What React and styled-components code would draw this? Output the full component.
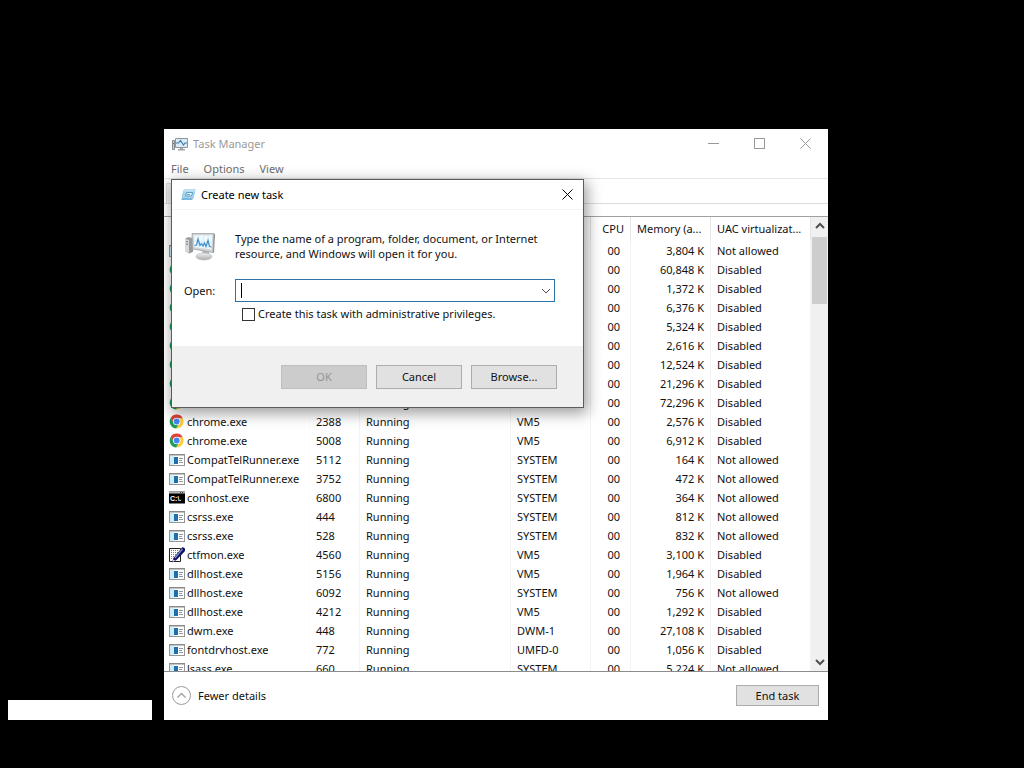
import React from 'react'
import styled, { createGlobalStyle } from 'styled-components'

const textColor = '#111';
const mutedColor = '#999';
const lineColor = '#e5e5e5';
const accentColor = '#2a72a8';
const faceColor = '#e1e1e1';
const fontSize = '11px';
const rowHeight = '19px';

const GlobalStyle = createGlobalStyle`
  * {
    box-sizing: border-box;
  }
  html, body, #root {
    height: 100%;
  }
  body {
    margin: 0;
    background: #000;
    color: ${textColor};
    font-family: "Noto Sans", "Open Sans", sans-serif;
    font-size: ${fontSize};
    line-height: 16px;
  }
  button, input {
    font: inherit;
    color: inherit;
    margin: 0;
    padding: 0;
  }
  svg {
    display: block;
    flex: none;
  }
`

const Desktop = styled.div`
  position: relative;
  height: 100%;
  min-height: 600px;
  overflow: hidden;
`
const BlankBox = styled.div`
  position: absolute;
  left: 8px;
  bottom: 48px;
  width: 144px;
  height: 20px;
  background: #fff;
`
const Window = styled.main`
  position: absolute;
  top: 129px;
  right: 196px;
  bottom: 48px;
  left: 164px;
  display: flex;
  flex-direction: column;
  background: #fff;
`
const TitleBar = styled.header`
  display: flex;
  align-items: center;
  height: 30px;
  padding-left: 8px;
  color: ${mutedColor};
`
const Title = styled.h1`
  flex: 1;
  margin: 0 0 0 5px;
  font-size: ${fontSize};
  font-weight: 400;
`
const CaptionButton = styled.button`
  display: flex;
  align-items: center;
  justify-content: center;
  align-self: flex-start;
  width: ${props => props.$width || '46px'};
  height: 29px;
  border: 0;
  background: none;
`
const MenuBar = styled.nav`
  display: flex;
  gap: 15px;
  height: 19px;
  padding-left: 7px;
  line-height: 20px;
`
const MenuItem = styled.button`
  border: 0;
  background: none;
  color: #6d6d6d;
`
const TabStrip = styled.div`
  display: flex;
  align-items: flex-end;
  height: 26px;
  padding-left: 2px;
  border-top: 1px solid ${lineColor};
  border-bottom: 1px solid #dcdcdc;
`
const Tab = styled.div`
  width: 62px;
  height: 20px;
  border: 1px solid #d9d9d9;
  border-bottom: 0;
  background: #f0f0f0;
`
const Content = styled.section`
  display: flex;
  flex: 1;
  min-height: 0;
  margin-top: 12px;
  border-top: 1px solid #a0a0a0;
  border-bottom: 1px solid #8c8c8c;
`
const TableArea = styled.div`
  flex: 1;
  min-width: 0;
  overflow: hidden;
`
const Table = styled.table`
  width: 100%;
  table-layout: fixed;
  border-collapse: separate;
  border-spacing: 0;
`
const Column = styled.col`
  width: ${props => props.$width};
`
const Cell = styled.td`
  height: ${rowHeight};
  padding: 0 ${props => props.$end || '6px'} 0 6px;
  overflow: hidden;
  border-right: 1px solid #f4f4f4;
  line-height: 18px;
  text-align: ${props => props.$align || 'left'};
  white-space: nowrap;

  &:first-child {
    padding: 0 0 0 5px;
    border-color: #fcfcfc;
  }
`
const HeadCell = styled(Cell).attrs({ as: 'th', scope: 'col' })`
  height: 24px;
  border-color: ${lineColor};
  font-weight: 400;
`
const ProcessName = styled.div`
  display: flex;
  align-items: center;
  gap: 2px;
`
const ScrollBar = styled.div`
  display: flex;
  flex-direction: column;
  width: 17px;
  padding: 0 1px;
  background: #f0f0f0;
`
const ScrollButton = styled.button`
  display: flex;
  align-items: center;
  justify-content: center;
  height: 18px;
  border: 0;
  background: none;
`
const ScrollTrack = styled.div`
  flex: 1;
  padding-top: 2px;
`
const ScrollThumb = styled.div`
  height: 16%;
  min-height: 20px;
  background: #cdcdcd;
`
const Footer = styled.footer`
  display: flex;
  align-items: center;
  justify-content: space-between;
  height: 48px;
  padding: 0 9px 1px 8px;
`
const DetailsButton = styled.button`
  display: flex;
  align-items: center;
  gap: 7px;
  border: 0;
  background: none;
`
const Button = styled.button`
  width: ${props => props.$width || '86px'};
  height: ${props => props.$height || '24px'};
  border: 1px solid #adadad;
  background: ${faceColor};

  &:disabled {
    border-color: #bfbfbf;
    background: #ccc;
    color: #949494;
  }
`
const Dialog = styled.form`
  position: absolute;
  top: 50px;
  left: 7px;
  width: 413px;
  border: 1px solid #5c5c5c;
  background: #fff;
  box-shadow: 2px 4px 14px 1px rgba(0, 0, 0, 0.4);
`
const DialogTitleBar = styled(TitleBar)`
  padding-left: 9px;
  border-bottom: 1px solid #f3f3f3;
  color: #000;
`
const DialogBody = styled.div`
  display: grid;
  grid-template-columns: 51px 1fr;
  row-gap: 17px;
  align-items: center;
  align-content: start;
  height: 136px;
  padding: 20px 28px 0 12px;
`
const Message = styled.p`
  margin: 0;
  line-height: 15px;
`
const ComboBox = styled.div`
  position: relative;
  display: flex;
  height: 23px;
  border: 1px solid ${accentColor};
`
const ComboInput = styled.input`
  flex: 1;
  min-width: 0;
  padding: 0 5px;
  border: 0;
  outline: 0;
  background: none;
  caret-color: transparent;
`
const Caret = styled.span`
  position: absolute;
  top: 3px;
  left: 5px;
  width: 1px;
  height: 15px;
  background: #000;
`
const ComboButton = styled.button`
  display: flex;
  align-items: center;
  justify-content: center;
  width: 17px;
  border: 0;
  background: none;
`
const CheckRow = styled.div`
  display: flex;
  grid-column: 2;
  align-items: center;
  gap: 3px;
  height: 16px;
  margin-top: -13px;
  padding-left: 7px;
`
const CheckBox = styled.input`
  width: 13px;
  height: 13px;
  border: 1px solid #333;
  background: #fff;
  appearance: none;

  &:checked {
    background: #333;
  }
`
const DialogFooter = styled.div`
  display: flex;
  align-items: center;
  justify-content: flex-end;
  gap: 9px;
  height: 61px;
  padding-right: 26px;
  background: #f0f0f0;
`

const TaskManagerIcon = () =>
  <svg width="16" height="16" viewBox="0 0 16 16">
    <path d="M.5 4.500h2v9h-2z" fill="#c7ccd0" stroke="#868e94" />
    <path d="M1 7.500h1" stroke="#6f777d" />
    <path d="M3.500 2.500h12v9h-12z" fill="#dcecf7" stroke="#8f979d" />
    <path d="M4 7h2.500l2-2.500 3 4.500 1.500-2H15" fill="none" stroke="#3f7da8" strokeWidth="1.200" />
    <path d="M8 12h3v1h2v1.500H6V13h2z" fill="#a0a8ae" />
  </svg>

const RunIcon = () =>
  <svg width="15" height="12" viewBox="0 0 15 12">
    <path d="M3 .5h11.500L12.500 9l-1.500 2H.5l1-6z" fill="#79b8dc" />
    <path d="M3 .5h11.500l-2 8.500H1z" fill="#a4d4ee" />
    <path d="M3 .5h11.500l-.5 2H2.600z" fill="#c4e4f4" />
    <path d="M5.500 3.500h6L10.700 7H4.600z" fill="#e9f7fc" stroke="#5c9fc8" />
    <path d="M6 5.500h3" stroke="#5c9fc8" />
  </svg>

const RunBigIcon = () =>
  <svg width="32" height="32" viewBox="0 0 32 32">
    <defs>
      <linearGradient id="stand" x1="0" y1="0" x2="0" y2="1">
        <stop offset="0" stopColor="#f2f2f2" />
        <stop offset="1" stopColor="#a8abad" />
      </linearGradient>
    </defs>
    <path d="M1 9l3-2 5 1v14l-4 1.500L1 21z" fill="#9a9d9f" />
    <path d="M1 9l4 1v13l-4-2z" fill="#d9dadb" />
    <path d="M2 11.500l2 .5M2 14l2 .5" stroke="#777b7e" />
    <path d="M18 20l7 1v5h-6z" fill="#b4b7b9" />
    <ellipse cx="20" cy="26.500" rx="8" ry="3.500" fill="url(#stand)" stroke="#b2b5b7" strokeWidth=".6" />
    <path d="M8 3.500L30 3.500l-1 19L8.500 19z" fill="#d0d2d3" stroke="#9fa3a6" strokeWidth=".8" />
    <path d="M30 3.500l1 1-1 18.500-1-.5z" fill="#8b8f92" />
    <path d="M9.800 5.300h18.500l-.8 14.200-17.200-2.300z" fill="#eef8fd" />
    <path d="M10 11l18 1.500M14.500 5.300v12.500M19.500 5.300v13M24 5.300v13.500" stroke="#cbe6f3" strokeWidth=".7" />
    <path d="M10.500 15.500l2-.5 1.500-6 2 6.500 1.500-2 1.500 2.500 1.500-3 1.500 3.500 2-6 1.500 6 2 .5" fill="none" stroke="#3f8fd0" strokeWidth="1.200" />
  </svg>

const ExeIcon = () =>
  <svg width="16" height="16" viewBox="0 0 16 16">
    <rect x=".5" y="2.500" width="15" height="11" fill="#fff" stroke="#969696" />
    <path d="M0 2.500h16" stroke="#8a8a8a" />
    <path d="M1 3.500h14" stroke="#c4c4c4" />
    <path d="M1 4h4v9H1z" fill="#cdeef8" />
    <path d="M5 5h4v7H5z" fill="#1f6fae" />
    <path d="M10 6.500h4M10 8.500h3M10 10.500h4" stroke="#8b9aa5" />
  </svg>

const ChromeIcon = () =>
  <svg width="16" height="16" viewBox="0 0 16 16">
    <path d="M1.600 4a7 7 0 0 1 12.300 .5H8L4.900 9.500z" fill="#dc4437" />
    <path d="M1.600 4A7 7 0 0 0 7.200 14.500L10.500 9.500H5z" fill="#1c9c58" />
    <path d="M13.900 4.500A7 7 0 0 1 7.200 14.500L10.500 9.500 10 4.500z" fill="#fccd40" />
    <circle cx="7.700" cy="7.500" r="3.700" fill="#fff" />
    <circle cx="7.700" cy="7.500" r="2.900" fill="#4285f4" />
  </svg>

const ConsoleIcon = () =>
  <svg width="16" height="16" viewBox="0 0 16 16">
    <path d="M0 1.500h16v12H0z" fill="#000" />
    <path d="M0 2.500h16" stroke="#b9b9b9" strokeWidth="2" />
    <path d="M11 2.500h1M13 2.500h1" stroke="#444" />
    <text x="1" y="11" fill="#fff" fontFamily="Liberation Sans, sans-serif" fontSize="7" fontWeight="700">C:\.</text>
  </svg>

const PenIcon = () =>
  <svg width="16" height="16" viewBox="0 0 16 16">
    <path d="M.5 1.500h11v13H.5z" fill="#fff" stroke="#222" />
    <path d="M2 3.500h8M2 5.500h8M2 7.500h8M2 9.500h8M2 11.500h8" stroke="#7a7a9a" strokeDasharray="1 1" />
    <path d="M13.500 0L16 1.500V4l-8.500 9L3 15.500l1.500-4.500z" fill="#11115e" />
    <path d="M13.500 2L6 11" stroke="#7a8fd8" strokeWidth="1.200" />
    <path d="M3.500 15l1-2.500 1.500 1z" fill="#fff" />
  </svg>

const Chevron = ({ up, size = 10, color = '#505050', weight = 2 }) =>
  <svg width={size} height={size} viewBox="0 0 10 10">
    <path d={up ? 'M1 7l4-4 4 4' : 'M1 3l4 4 4-4'} fill="none" stroke={color} strokeWidth={weight} />
  </svg>

const Cross = ({ size = 11 }) =>
  <svg width={size} height={size} viewBox="0 0 11 11">
    <path d="M.5.5l10 10M10.500.5l-10 10" stroke="currentColor" />
  </svg>

const FewerIcon = () =>
  <svg width="19" height="19" viewBox="0 0 19 19">
    <circle cx="9.500" cy="9.500" r="9" fill="none" stroke="#9a9a9a" />
    <path d="M5.500 11.500l4-4 4 4" fill="none" stroke="#a6a6a6" strokeWidth="1.500" />
  </svg>

const icons = {
  exe: ExeIcon,
  chrome: ChromeIcon,
  console: ConsoleIcon,
  pen: PenIcon,
}

const columns = [
  { label: 'Name', width: '146px' },
  { label: 'PID', width: '50px' },
  { label: 'Status', width: '151px' },
  { label: 'User name', width: '80px' },
  { label: 'CPU', title: 'CPU', width: '40px', align: 'right' },
  { label: 'Memory', title: 'Memory (a...', width: '80px' },
  { label: 'UAC virtualization', title: 'UAC virtualizat...', width: 'auto' },
]

// icon, name, pid, status, user, memory, UAC virtualization
const processes = [
  ['exe', '', '', '', '', '3,804 K', 'Not allowed'],
  ['chrome', '', '', '', '', '60,848 K', 'Disabled'],
  ['chrome', '', '', '', '', '1,372 K', 'Disabled'],
  ['chrome', '', '', '', '', '6,376 K', 'Disabled'],
  ['chrome', '', '', '', '', '5,324 K', 'Disabled'],
  ['chrome', '', '', '', '', '2,616 K', 'Disabled'],
  ['chrome', '', '', '', '', '12,524 K', 'Disabled'],
  ['chrome', '', '', '', '', '21,296 K', 'Disabled'],
  ['chrome', '', '', 'Running', '', '72,296 K', 'Disabled'],
  ['chrome', 'chrome.exe', '2388', 'Running', 'VM5', '2,576 K', 'Disabled'],
  ['chrome', 'chrome.exe', '5008', 'Running', 'VM5', '6,912 K', 'Disabled'],
  ['exe', 'CompatTelRunner.exe', '5112', 'Running', 'SYSTEM', '164 K', 'Not allowed'],
  ['exe', 'CompatTelRunner.exe', '3752', 'Running', 'SYSTEM', '472 K', 'Not allowed'],
  ['console', 'conhost.exe', '6800', 'Running', 'SYSTEM', '364 K', 'Not allowed'],
  ['exe', 'csrss.exe', '444', 'Running', 'SYSTEM', '812 K', 'Not allowed'],
  ['exe', 'csrss.exe', '528', 'Running', 'SYSTEM', '832 K', 'Not allowed'],
  ['pen', 'ctfmon.exe', '4560', 'Running', 'VM5', '3,100 K', 'Disabled'],
  ['exe', 'dllhost.exe', '5156', 'Running', 'VM5', '1,964 K', 'Disabled'],
  ['exe', 'dllhost.exe', '6092', 'Running', 'SYSTEM', '756 K', 'Not allowed'],
  ['exe', 'dllhost.exe', '4212', 'Running', 'VM5', '1,292 K', 'Disabled'],
  ['exe', 'dwm.exe', '448', 'Running', 'DWM-1', '27,108 K', 'Disabled'],
  ['exe', 'fontdrvhost.exe', '772', 'Running', 'UMFD-0', '1,056 K', 'Disabled'],
  ['exe', 'lsass.exe', '660', 'Running', 'SYSTEM', '5,224 K', 'Not allowed'],
]

const ProcessRow = ({ process }) => {
  const [icon, name, pid, status, user, memory, uac] = process
  const Icon = icons[icon]
  return (
    <tr>
      <Cell><ProcessName><Icon />{name}</ProcessName></Cell>
      <Cell>{pid}</Cell>
      <Cell>{status}</Cell>
      <Cell>{user}</Cell>
      <Cell $align="right" $end="10px">00</Cell>
      <Cell $align="right">{memory}</Cell>
      <Cell>{uac}</Cell>
    </tr>
  )
}

const ProcessTable = () =>
  <TableArea>
    <Table>
      <colgroup>
        {columns.map(c => <Column key={c.label} $width={c.width} />)}
      </colgroup>
      <thead>
        <tr>
          {columns.map(c =>
            <HeadCell key={c.label} aria-label={c.label} $align={c.align}>{c.title}</HeadCell>
          )}
        </tr>
      </thead>
      <tbody>
        {processes.map((p, i) => <ProcessRow key={i} process={p} />)}
      </tbody>
    </Table>
  </TableArea>

const NewTaskDialog = () =>
  <Dialog role="dialog" aria-label="Create new task" onSubmit={e => e.preventDefault()}>
    <DialogTitleBar>
      <RunIcon />
      <Title as="h2">Create new task</Title>
      <CaptionButton type="button" $width="31px" aria-label="Close"><Cross /></CaptionButton>
    </DialogTitleBar>
    <DialogBody>
      <RunBigIcon />
      <Message>
        Type the name of a program, folder, document, or Internet<br />
        resource, and Windows will open it for you.
      </Message>
      <label htmlFor="open">Open:</label>
      <ComboBox>
        <ComboInput id="open" type="text" autoComplete="off" />
        <Caret />
        <ComboButton type="button" aria-label="Show history"><Chevron weight={1} /></ComboButton>
      </ComboBox>
      <CheckRow>
        <CheckBox id="admin" type="checkbox" />
        <label htmlFor="admin">Create this task with administrative privileges.</label>
      </CheckRow>
    </DialogBody>
    <DialogFooter>
      <Button type="submit" disabled>OK</Button>
      <Button type="button">Cancel</Button>
      <Button type="button">Browse...</Button>
    </DialogFooter>
  </Dialog>

const App = () =>
  <Desktop>
    <GlobalStyle />
    <BlankBox />
    <Window>
      <TitleBar>
        <TaskManagerIcon />
        <Title>Task Manager</Title>
        <CaptionButton aria-label="Minimize">
          <svg width="11" height="11"><path d="M0 5.500h11" stroke="currentColor" /></svg>
        </CaptionButton>
        <CaptionButton aria-label="Maximize">
          <svg width="11" height="11"><rect x=".5" y=".5" width="10" height="10" fill="none" stroke="currentColor" /></svg>
        </CaptionButton>
        <CaptionButton aria-label="Close"><Cross /></CaptionButton>
      </TitleBar>
      <MenuBar>
        <MenuItem>File</MenuItem>
        <MenuItem>Options</MenuItem>
        <MenuItem>View</MenuItem>
      </MenuBar>
      <TabStrip><Tab /></TabStrip>
      <Content>
        <ProcessTable />
        <ScrollBar>
          <ScrollButton aria-label="Scroll up"><Chevron up /></ScrollButton>
          <ScrollTrack><ScrollThumb /></ScrollTrack>
          <ScrollButton aria-label="Scroll down"><Chevron /></ScrollButton>
        </ScrollBar>
      </Content>
      <Footer>
        <DetailsButton><FewerIcon />Fewer details</DetailsButton>
        <Button $width="83px" $height="21px">End task</Button>
      </Footer>
      <NewTaskDialog />
    </Window>
  </Desktop>

export default App
